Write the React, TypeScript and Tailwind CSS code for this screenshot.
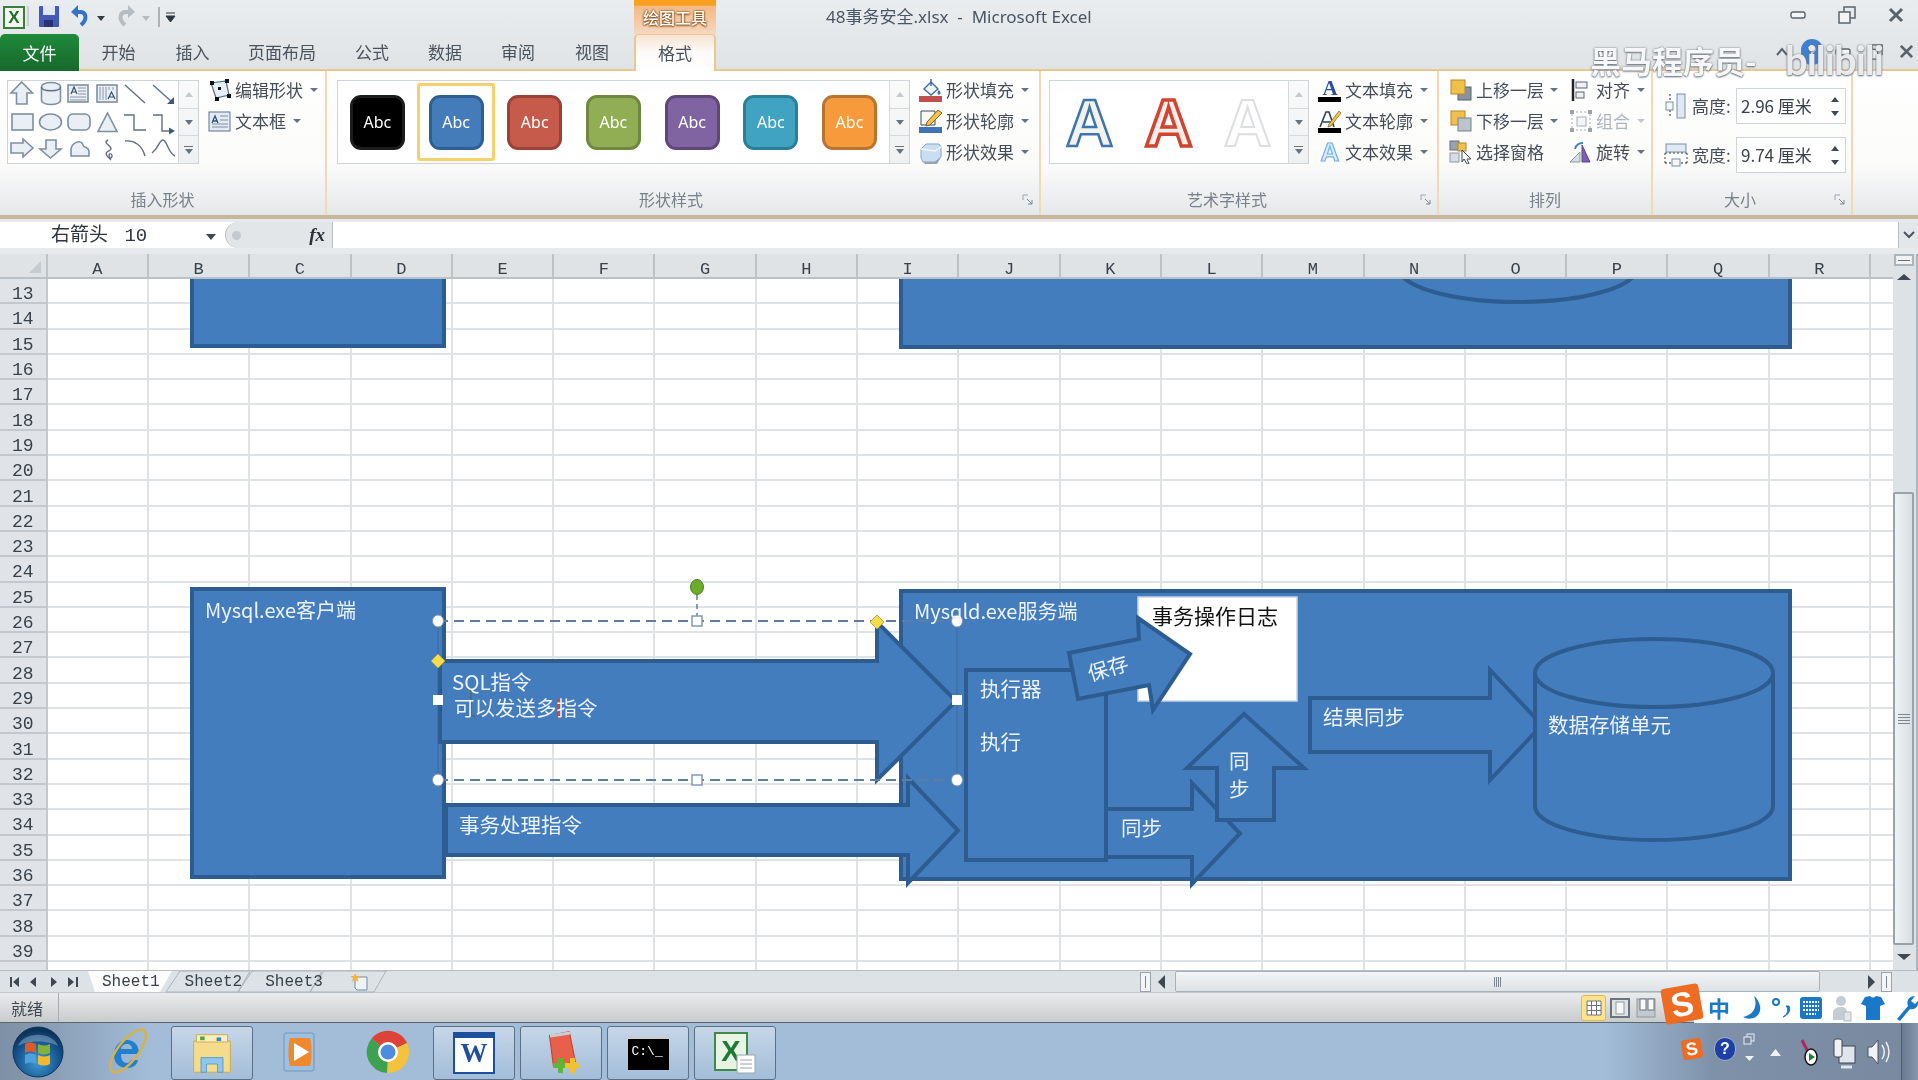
import type { ReactNode } from "react"

const COLUMNS = ["A", "B", "C", "D", "E", "F", "G", "H", "I", "J", "K", "L", "M", "N", "O", "P", "Q", "R"]
const ROWS = Array.from({ length: 27 }, (_, i) => i + 13)

const SWATCHES = [
  { box: "bg-[#000000] border-[#1c1c1c]" },
  { box: "bg-[#447cb9] border-[#2e5f92]", selected: true },
  { box: "bg-[#c75b4b] border-[#9a4237]" },
  { box: "bg-[#92ae54] border-[#70873f]" },
  { box: "bg-[#8064a2] border-[#5d4878]" },
  { box: "bg-[#40a3c2] border-[#2c7f98]" },
  { box: "bg-[#f79a3b] border-[#b9752f]" },
]

const FILL = "#437dbd"
const LINE = "#2d5c91"

function Caret({ muted }: { muted?: boolean }) {
  return (
    <span
      className={
        muted
          ? "w-0 h-0 border-x-[4px] border-t-[4px] border-x-transparent border-t-[#c3c8cd]"
          : "w-0 h-0 border-x-[4px] border-t-[4px] border-x-transparent border-t-[#67727d]"
      }
    />
  )
}

function Launcher() {
  return (
    <svg width="12" height="12" viewBox="0 0 12 12" className="absolute right-[5px] bottom-[9px]">
      <path d="M1 6V1h5" fill="none" stroke="#9aa5af" />
      <path d="M5 5l5 5M10 6v4H6" fill="none" stroke="#7b8894" />
    </svg>
  )
}

function RibbonGroup({ className, label, launcher, children }: { className: string; label: string; launcher?: boolean; children: ReactNode }) {
  return (
    <div className={`relative h-full border-r-2 border-[#f0d9b3] ${className}`}>
      <div className="flex h-[117px] pt-[3px]">{children}</div>
      <div className={launcher ? "pr-[24px] text-center text-[16px] leading-[22px] text-[#77818b]" : "text-center text-[16px] leading-[22px] text-[#77818b]"}>{label}</div>
      {launcher && <Launcher />}
    </div>
  )
}

function MenuItem({ icon, label, muted, noCaret, caretGap = "ml-[7px]" }: { icon: ReactNode; label: string; muted?: boolean; noCaret?: boolean; caretGap?: string }) {
  return (
    <div className="flex items-center h-[31px]">
      <span className="w-[24px] h-[24px] flex items-center justify-center shrink-0">{icon}</span>
      <span className={muted ? "ml-[3px] text-[17px] text-[#aeb5bc] whitespace-nowrap" : "ml-[3px] text-[17px] text-[#454e57] whitespace-nowrap"}>{label}</span>
      {!noCaret && (
        <span className={`${caretGap} flex`}>
          <Caret muted={muted} />
        </span>
      )}
    </div>
  )
}

function ScrollCol() {
  return (
    <div className="w-[20px] h-full flex flex-col border-l border-[#d5d9dd] bg-gradient-to-b from-[#fafafa] to-[#eef0f1]">
      <div className="flex-1 flex items-center justify-center border-b border-[#d5d9dd]">
        <span className="w-0 h-0 border-x-[4px] border-b-[5px] border-x-transparent border-b-[#c5cacf]" />
      </div>
      <div className="flex-1 flex items-center justify-center border-b border-[#d5d9dd]">
        <span className="w-0 h-0 border-x-[4px] border-t-[5px] border-x-transparent border-t-[#67727d]" />
      </div>
      <div className="flex-1 flex flex-col items-center justify-center gap-[2px]">
        <span className="w-[9px] h-[1px] bg-[#67727d]" />
        <span className="w-0 h-0 border-x-[4px] border-t-[5px] border-x-transparent border-t-[#67727d]" />
      </div>
    </div>
  )
}

function ShapeGlyphs() {
  const s = { fill: "#e9eff5", stroke: "#7d8fa1", strokeWidth: 1.6 }
  const l = { fill: "none", stroke: "#5f7184", strokeWidth: 1.4 }
  return (
    <svg width="170" height="82" viewBox="0 0 170 82">
      {/* first row */}
      <path d="M13.7 1L24.5 12H19V23H8.5V12H3z" {...s} />
      <path d="M33.5 6c0-6 19-6 19 0v13c0 6-19 6-19 0z" {...s} />
      <path d="M33.5 6c0 5 19 5 19 0" {...l} />
      <rect x="60" y="4" width="20" height="17" {...s} />
      <path d="M63 13l3-7 3 7M64 11h4" fill="none" stroke="#33506e" strokeWidth="1.2" />
      <path d="M70 7h8M70 10h8M70 13h8M62 16h16M62 19h16" stroke="#7d8fa1" strokeWidth="0.9" />
      <rect x="89" y="4" width="20" height="17" {...s} />
      <path d="M92 6v13M95 6v13M98 6v13M101 6v3M105 6v3" stroke="#7d8fa1" strokeWidth="0.9" />
      <path d="M100 18l3.500-7 3.500 7M101 16h5" fill="none" stroke="#33506e" strokeWidth="1.2" />
      <path d="M117 4l20 18" {...l} />
      <path d="M145 4l19 17" {...l} />
      <path d="M166 23v-7l-7 7z" fill="#3c5a78" />
      {/* second row */}
      <rect x="4" y="33" width="21" height="16" {...s} />
      <ellipse cx="42.5" cy="41" rx="11" ry="8" {...s} />
      <rect x="60" y="33" width="22" height="16" rx="5" {...s} />
      <path d="M99.5 32L109 50.5H90z" {...s} />
      <path d="M116 34h10v15h12" {...l} />
      <path d="M145 34h9v16h8" {...l} />
      <path d="M167 50l-6-3.500v7z" fill="#3c5a78" />
      {/* third row */}
      <path d="M3 62h12v-4L25 67 15 76v-4H3z" {...s} />
      <path d="M38 59h10v9h5L42.500 77 32 68h6z" {...s} />
      <path d="M63 75v-7c1-6 8-9 11-6 2 2 0 3 3 4s4 3 4 5v4z" {...s} />
      <path d="M100 59c-6 3 4 6 3 9s-7 2-4 7 7 0 4-2-2 5 0 6" {...l} />
      <path d="M117 60c9-1 17 4 20 15" {...l} />
      <path d="M144 72c7-5 7-13 11-13s5 13 12 16" {...l} />
    </svg>
  )
}

function TinyIcon({ children }: { children: ReactNode }) {
  return (
    <svg width="24" height="24" viewBox="0 0 24 24">
      {children}
    </svg>
  )
}

function ArtA({ className }: { className: string }) {
  return <div className={`w-[79px] text-center text-[66px] leading-[84px] font-bold font-['Liberation_Sans',sans-serif] ${className}`}>A</div>
}

function SizeField({ icon, label, value }: { icon: ReactNode; label: string; value: string }) {
  return (
    <div className="flex items-center h-[36px]">
      <span className="w-[24px] flex justify-center">{icon}</span>
      <span className="ml-[4px] w-[44px] text-[17px] text-[#454e57]">{label}</span>
      <div className="w-[110px] h-[36px] border border-[#cfd4d8] bg-white flex items-center pl-[4px] text-[17px] text-[#39424b]">
        <span className="flex-1 whitespace-nowrap">{value}</span>
        <span className="w-[20px] flex flex-col items-center gap-[9px]">
          <span className="w-0 h-0 border-x-[4px] border-b-[5px] border-x-transparent border-b-[#3f4850]" />
          <span className="w-0 h-0 border-x-[4px] border-t-[5px] border-x-transparent border-t-[#3f4850]" />
        </span>
      </div>
    </div>
  )
}

function TitleRow() {
  return (
    <div className="flex h-[34px]">
      <div className="w-[634px] relative flex items-center">
        <div className="ml-[3px] w-[22px] h-[23px] border-2 border-[#3a7d3c] bg-[#f3f8ee] text-[#1f6b2c] text-[17px] leading-[19px] font-bold text-center font-['Liberation_Sans',sans-serif]">X</div>
        <svg width="155" height="28" viewBox="25 0 155 28">
          <path d="M28 3v20" stroke="#a9b1b8" />
          <rect x="39" y="3" width="20" height="21" rx="1" fill="#4259b8" />
          <rect x="43" y="3" width="12" height="9" fill="#dfe6f4" />
          <rect x="44" y="17" width="9" height="7" fill="#27346f" />
          {/* undo */}
          <path d="M74 9h6c6 0 8 7 1 13" fill="none" stroke="#3273c9" strokeWidth="4" />
          <path d="M78 2l-7 7 7 6z" fill="#3273c9" />
          <path d="M97 13h8l-4 5z" fill="#333c45" />
          {/* redo */}
          <path d="M132 9h-6c-6 0-8 7-1 13" fill="none" stroke="#b5bcc2" strokeWidth="4" />
          <path d="M128 2l7 7-7 6z" fill="#b5bcc2" />
          <path d="M142 13h8l-4 5z" fill="#b5bcc2" />
          <path d="M159 4v20" stroke="#717a83" />
          <path d="M166 10h9M166 13h9l-4.500 6z" fill="#2f3840" stroke="#2f3840" />
        </svg>
      </div>
      <div className="w-[82px] flex items-center justify-center text-[16px] font-medium text-white [text-shadow:0_0_2px_#8a4f18,0_0_2px_#8a4f18,0_1px_2px_#8a4f18] bg-gradient-to-b from-[#f9a01e] from-[16%] via-[#f3b884] via-[17%] to-[#f5d8bf]">绘图工具</div>
      <div className="ml-[110px] leading-[33px] text-[17px] text-[#4a5561] font-['Noto_Sans','Noto_Sans_CJK_SC',sans-serif] whitespace-pre">48事务安全.xlsx  -  Microsoft Excel</div>
      <div className="ml-auto flex items-center pr-[14px] gap-[32px] mb-[4px]">
        <svg width="16" height="8" viewBox="0 0 16 8">
          <rect x="1" y="1" width="14" height="6" rx="2" fill="#f5f6f7" stroke="#59636c" strokeWidth="1.4" />
        </svg>
        <svg width="18" height="18" viewBox="0 0 18 18">
          <rect x="6" y="1" width="11" height="11" fill="none" stroke="#59636c" strokeWidth="1.5" />
          <rect x="1" y="6" width="11" height="11" fill="#f3f4f5" stroke="#59636c" strokeWidth="1.5" />
        </svg>
        <svg width="16" height="16" viewBox="0 0 16 16">
          <path d="M2 2l12 12M14 2L2 14" stroke="#59636c" strokeWidth="3" />
        </svg>
      </div>
    </div>
  )
}

function TabRow() {
  const tabs = [
    { label: "开始", w: "w-[79px]" },
    { label: "插入", w: "w-[69px]" },
    { label: "页面布局", w: "w-[110px]" },
    { label: "公式", w: "w-[70px]" },
    { label: "数据", w: "w-[76px]" },
    { label: "审阅", w: "w-[70px]" },
    { label: "视图", w: "w-[78px]" },
  ]
  return (
    <div className="flex h-[37px] border-b-2 border-[#ebc78f]">
      <div className="w-[79px] h-[37px] rounded-t-[5px] bg-gradient-to-b from-[#1f8a3a] to-[#17692b] text-white text-[17px] flex items-center justify-center">文件</div>
      {tabs.map((t) => (
        <div key={t.label} className={`${t.w} flex items-center justify-center text-[17px] text-[#4a535c]`}>
          {t.label}
        </div>
      ))}
      <div className="ml-[3px] w-[82px] h-[37px] rounded-t-[4px] border-x-2 border-t border-[#ebc78f] bg-gradient-to-b from-[#f7e3d2] via-[#fdfbf9] to-white text-[17px] text-[#4a535c] flex items-center justify-center">格式</div>
      <div className="ml-auto flex items-center pr-[4px]">
        <svg width="14" height="10" viewBox="0 0 14 10">
          <path d="M2 8l5-6 5 6" fill="none" stroke="#59636c" strokeWidth="2" />
        </svg>
        <span className="ml-[12px] w-[22px] h-[26px] rounded-full bg-[#3f80cf] text-white text-[18px] leading-[26px] text-center font-bold">?</span>
        <svg width="16" height="8" viewBox="0 0 16 8" className="ml-[12px]">
          <rect x="1" y="1" width="14" height="6" rx="2" fill="#f5f6f7" stroke="#59636c" strokeWidth="1.4" />
        </svg>
        <svg width="16" height="16" viewBox="0 0 18 18" className="ml-[16px]">
          <rect x="6" y="1" width="11" height="11" fill="none" stroke="#59636c" strokeWidth="1.5" />
          <rect x="1" y="6" width="11" height="11" fill="#f3f4f5" stroke="#59636c" strokeWidth="1.5" />
        </svg>
        <svg width="15" height="15" viewBox="0 0 16 16" className="ml-[16px]">
          <path d="M2 2l12 12M14 2L2 14" stroke="#59636c" strokeWidth="3" />
        </svg>
      </div>
    </div>
  )
}

function Ribbon() {
  return (
    <div className="flex h-[144px] bg-gradient-to-b from-white via-[#fbfbfa] via-[65%] to-[#e5e8ea]">
      <RibbonGroup className="w-[327px]" label="插入形状">
        <div className="ml-[7px] mt-[6px] w-[192px] h-[84px] flex border border-[#cfd4d8] bg-white">
          <ShapeGlyphs />
          <ScrollCol />
        </div>
        <div className="ml-[9px]">
          <MenuItem
            label="编辑形状"
            icon={
              <TinyIcon>
                <path d="M3 5l15-2 3 14-13 3z" fill="#e6eef7" stroke="#51708f" strokeWidth="1.2" />
                <path d="M2 3h4v4H2zM17 1h4v4h-4zM19 16h4v4h-4zM7 19h4v4H7zM10 9h3v3h-3z" fill="#101418" />
              </TinyIcon>
            }
          />
          <MenuItem
            label="文本框"
            icon={
              <TinyIcon>
                <rect x="1" y="3" width="21" height="19" fill="#e3ecf5" stroke="#5a7390" />
                <path d="M4 14l3-7 3 7M5 12h4" fill="none" stroke="#33506e" strokeWidth="1.3" />
                <path d="M12 7h8M12 11h8M4 15h16M4 18h16" stroke="#7d90a3" />
              </TinyIcon>
            }
          />
        </div>
      </RibbonGroup>

      <RibbonGroup className="w-[714px]" label="形状样式" launcher>
        <div className="ml-[10px] mt-[6px] w-[573px] h-[84px] flex border border-[#cfd4d8] bg-white">
          <div className="flex-1 flex items-center">
            {SWATCHES.map((s, i) => (
              <div
                key={i}
                className={
                  s.selected
                    ? "w-[78.7px] h-[78px] flex items-center justify-center border-[3px] border-[#f6d06c] rounded-[3px] bg-white"
                    : "w-[78.7px] h-[78px] flex items-center justify-center"
                }
              >
                <div className={`w-[55px] h-[55px] rounded-[11px] border-[3px] flex items-center justify-center text-[16px] text-white font-['Noto_Sans',sans-serif] ${s.box}`}>Abc</div>
              </div>
            ))}
          </div>
          <ScrollCol />
        </div>
        <div className="ml-[9px]">
          <MenuItem
            label="形状填充"
            icon={
              <TinyIcon>
                <path d="M5 11l7-7 7 7-7 6z" fill="#f2f4f6" stroke="#3d6ea8" strokeWidth="1.4" />
                <path d="M12 1v7" stroke="#3d6ea8" strokeWidth="1.5" />
                <path d="M20 12c2 2 2 4 0 5-2-1-2-3 0-5z" fill="#3d6ea8" />
                <rect x="0" y="18" width="23" height="6" fill="#c0504d" />
              </TinyIcon>
            }
          />
          <MenuItem
            label="形状轮廓"
            icon={
              <TinyIcon>
                <path d="M2 2h14v14H2z" fill="#f7f7f7" stroke="#3c4a58" />
                <path d="M8 13l11-12 4 3L11 16l-4 1z" fill="#f2c14b" stroke="#7a6320" />
                <rect x="0" y="18" width="23" height="6" fill="#3f73b3" />
              </TinyIcon>
            }
          />
          <MenuItem
            label="形状效果"
            icon={
              <TinyIcon>
                <path d="M7 4h13l2 3v10l-6 5H4l-2-4V9z" fill="#c9def2" stroke="#8ba8c5" />
                <path d="M2 9l14 2 6-4" fill="none" stroke="#f4f8fc" strokeWidth="1.5" />
                <path d="M4 22h12l6-5-4 7H6z" fill="#9aa3ad" />
              </TinyIcon>
            }
          />
        </div>
      </RibbonGroup>

      <RibbonGroup className="w-[398px]" label="艺术字样式" launcher>
        <div className="ml-[8px] mt-[6px] w-[260px] h-[84px] flex border border-[#cfd4d8] bg-white">
          <div className="flex-1 flex">
            <ArtA className="text-[#f2f3ee] [-webkit-text-stroke:2.5px_#3f74ad]" />
            <ArtA className="text-[#fbeee9] [-webkit-text-stroke:3.5px_#cf4433]" />
            <ArtA className="text-white [-webkit-text-stroke:2px_#dcdedf]" />
          </div>
          <ScrollCol />
        </div>
        <div className="ml-[9px]">
          <MenuItem
            label="文本填充"
            icon={
              <span className="relative w-[24px] h-[24px] flex justify-center">
                <span className="text-[21px] leading-[20px] font-bold text-[#2b4f9e] font-['Liberation_Serif',serif]">A</span>
                <span className="absolute left-0 bottom-0 w-[23px] h-[5px] bg-black" />
              </span>
            }
          />
          <MenuItem
            label="文本轮廓"
            icon={
              <TinyIcon>
                <path d="M2 18L8 3h3l5 15M5 13h9" fill="none" stroke="#33404d" strokeWidth="1.6" />
                <path d="M11 15L21 2l2 2-10 13-3 1z" fill="#f2c14b" stroke="#7a6320" strokeWidth="0.7" />
                <rect x="0" y="19" width="23" height="5" fill="#000" />
              </TinyIcon>
            }
          />
          <MenuItem label="文本效果" icon={<span className="text-[26px] leading-[24px] font-bold text-[#dcecf9] [-webkit-text-stroke:1.2px_#6fb0e6] font-['Liberation_Sans',sans-serif]">A</span>} />
        </div>
      </RibbonGroup>

      <RibbonGroup className="w-[214px]" label="排列">
        <div className="ml-[10px] w-[120px]">
          <MenuItem
            label="上移一层"
            caretGap="ml-[6px]"
            icon={
              <TinyIcon>
                <rect x="9" y="9" width="13" height="13" fill="#8a949e" stroke="#59636c" />
                <rect x="2" y="2" width="14" height="14" fill="#f1bf4b" stroke="#b78a23" />
              </TinyIcon>
            }
          />
          <MenuItem
            label="下移一层"
            caretGap="ml-[6px]"
            icon={
              <TinyIcon>
                <rect x="2" y="2" width="14" height="14" fill="#f1bf4b" stroke="#b78a23" />
                <rect x="9" y="9" width="13" height="13" fill="#bcc4cb" stroke="#77828c" />
              </TinyIcon>
            }
          />
          <MenuItem
            label="选择窗格"
            noCaret
            icon={
              <TinyIcon>
                <rect x="1" y="1" width="9" height="9" fill="#98a2ab" stroke="#66717b" />
                <rect x="9" y="3" width="8" height="8" fill="#f1bf4b" stroke="#b78a23" />
                <rect x="1" y="13" width="9" height="9" fill="#d9dde1" stroke="#8f99a2" />
                <path d="M13 10l9 9h-4l2 5-2 0-3-5-2 3z" fill="#fff" stroke="#3c4650" />
              </TinyIcon>
            }
          />
        </div>
        <div>
          <MenuItem
            label="对齐"
            icon={
              <TinyIcon>
                <path d="M4 1v22" stroke="#1d2227" strokeWidth="2.5" />
                <rect x="7" y="4" width="11" height="6" fill="#eef1f4" stroke="#5b6671" />
                <rect x="7" y="14" width="8" height="6" fill="#eef1f4" stroke="#5b6671" />
              </TinyIcon>
            }
          />
          <MenuItem
            label="组合"
            muted
            icon={
              <TinyIcon>
                <rect x="3" y="3" width="18" height="18" fill="none" stroke="#a7aeb5" strokeDasharray="2 2" />
                <rect x="8" y="8" width="9" height="9" fill="#f4f5f6" stroke="#a7aeb5" />
                <path d="M1 1h4v4H1zM19 1h4v4h-4zM1 19h4v4H1zM19 19h4v4h-4z" fill="#9ca3aa" />
              </TinyIcon>
            }
          />
          <MenuItem
            label="旋转"
            icon={
              <TinyIcon>
                <path d="M1 22l10-10v10z" fill="#d7dbdf" stroke="#8e98a1" />
                <path d="M13 22V5l8 17z" fill="#7a5fb3" stroke="#5b4490" />
                <path d="M6 9c1-4 4-6 8-6" fill="none" stroke="#3d7dc4" strokeWidth="1.8" />
              </TinyIcon>
            }
          />
        </div>
      </RibbonGroup>

      <RibbonGroup className="w-[200px]" label="大小" launcher>
        <div className="ml-[11px] mt-[14px] flex flex-col gap-[13px]">
          <SizeField
            label="高度:"
            value="2.96 厘米"
            icon={
              <svg width="22" height="26" viewBox="0 0 22 26">
                <rect x="12" y="1" width="8" height="24" fill="#dfe9f3" stroke="#7a8fa5" />
                <path d="M5 1v24" stroke="#20262c" strokeDasharray="2 2" />
                <rect x="1" y="9" width="7" height="8" fill="#f5f6f7" stroke="#7a8fa5" />
              </svg>
            }
          />
          <SizeField
            label="宽度:"
            value="9.74 厘米"
            icon={
              <svg width="24" height="24" viewBox="0 0 24 24">
                <rect x="2" y="1" width="20" height="8" fill="#dfe9f3" stroke="#7a8fa5" />
                <path d="M1 10h22M1 10v11M23 10v11" stroke="#3f4850" strokeDasharray="2 2" fill="none" />
                <path d="M1 20h22" stroke="#20262c" strokeDasharray="2 2" />
                <rect x="8" y="16" width="8" height="7" fill="#f5f6f7" stroke="#7a8fa5" />
              </svg>
            }
          />
        </div>
      </RibbonGroup>
    </div>
  )
}

function FormulaBar() {
  return (
    <div className="h-[39px] bg-[#e7eaec] border-t-[4px] border-[#c9b79c]">
      <div className="mt-[3px] h-[26px] flex bg-white">
        <div className="w-[225px] flex items-center pl-[51px] pr-[9px] pt-[3px] font-['Liberation_Mono','Noto_Sans_CJK_SC',monospace] text-[19px] text-[#2e353c] whitespace-pre [word-spacing:5px]">
          <span className="flex-1">右箭头 10</span>
          <span className="w-0 h-0 border-x-[5px] border-t-[6px] border-x-transparent border-t-[#3f4850]" />
        </div>
        <div className="w-[108px] rounded-l-full flex items-center justify-end pr-[7px] bg-[#e2e6e9] border-l border-[#b7bec4] border-r">
          <span className="mr-auto ml-[6px] w-[9px] h-[9px] rounded-full bg-[#c3c9ce]" />
          <span className="font-['Liberation_Serif',serif] italic font-bold text-[19px] text-[#2b3238]">fx</span>
        </div>
        <div className="flex-1" />
        <div className="w-[20px] bg-[#e4e7ea] border-l border-[#b7bec4] flex items-center justify-center">
          <svg width="12" height="8" viewBox="0 0 12 8">
            <path d="M1 1l5 5 5-5" fill="none" stroke="#4a535c" strokeWidth="2" />
          </svg>
        </div>
      </div>
    </div>
  )
}

function ArrowRight({ x, tip, y1, y2, neck, top, bottom }: { x: number; tip: number; y1: number; y2: number; neck: number; top: number; bottom: number }) {
  const mid = (top + bottom) / 2
  return <polygon points={`${x},${y1} ${neck},${y1} ${neck},${top} ${tip},${mid} ${neck},${bottom} ${neck},${y2} ${x},${y2}`} fill={FILL} stroke={LINE} strokeWidth="4" strokeLinejoin="miter" />
}

function Diagram() {
  return (
    <svg width="1893" height="691" viewBox="0 279 1893 691" className="absolute left-0 top-0">
      {/* upper shapes, cut off by the scroll position */}
      <rect x="192" y="260" width="252" height="86" fill={FILL} stroke={LINE} strokeWidth="4" />
      <rect x="901" y="260" width="889" height="87" fill={FILL} stroke={LINE} strokeWidth="4" />
      <ellipse cx="1518" cy="268" rx="119" ry="34" fill="none" stroke={LINE} strokeWidth="4" />

      <rect x="192" y="589" width="252" height="288" fill={FILL} stroke={LINE} strokeWidth="4" />
      <rect x="901" y="591" width="889" height="288" fill={FILL} stroke={LINE} strokeWidth="4" />
      <rect x="1138" y="597" width="159" height="104" fill="#ffffff" stroke="#c8d4e0" strokeWidth="1.5" />
      <rect x="966" y="670" width="140" height="190" fill={FILL} stroke={LINE} strokeWidth="4" />

      <ArrowRight x={1106} tip={1240} y1={809} y2={857} neck={1192} top={783} bottom={884} />
      <polygon points="1244,714 1304,768 1274,768 1274,820 1217,820 1217,768 1187,768" fill={FILL} stroke={LINE} strokeWidth="4" />
      <polygon points="1069,653 1139,639 1138,618 1190,654 1153,710 1149,685 1078,699" fill={FILL} stroke={LINE} strokeWidth="4" />

      <ArrowRight x={1310} tip={1542} y1={698} y2={752} neck={1490} top={670} bottom={780} />

      <path d="M1535 673v133c0 19 54 34 119 34s119-15 119-34V673" fill={FILL} stroke={LINE} strokeWidth="4" />
      <ellipse cx="1654" cy="673" rx="119" ry="34" fill={FILL} stroke={LINE} strokeWidth="4" />

      <ArrowRight x={440} tip={956} y1={661} y2={742} neck={877} top={622} bottom={780} />
      <ArrowRight x={446} tip={958} y1={805} y2={855} neck={908} top={778} bottom={883} />

      {/* selection frame of the arrow being edited */}
      <path d="M438 621H957M438 780H957" stroke="#5d7f9f" strokeWidth="2" strokeDasharray="10 6" />
      <path d="M438 621V780M957 621V780" stroke="#3a628c" strokeWidth="1" opacity="0.7" />
      <path d="M697 595V621" stroke="#5d7f9f" strokeWidth="1.5" strokeDasharray="5 4" />
      <ellipse cx="697" cy="587" rx="6.5" ry="7.5" fill="#69ad2a" stroke="#4b7f1f" />
      {[
        [438, 621],
        [957, 621],
        [438, 780],
        [957, 780],
      ].map(([cx, cy]) => (
        <ellipse key={`${cx}-${cy}`} cx={cx} cy={cy} rx="5.5" ry="6" fill="#fff" stroke="#7f9ab5" />
      ))}
      <rect x="692" y="616" width="10" height="10" fill="#fff" stroke="#7f9ab5" strokeWidth="1.5" />
      <rect x="692" y="775" width="10" height="10" fill="#fff" stroke="#7f9ab5" strokeWidth="1.5" />
      <rect x="433" y="695" width="10" height="10" fill="#fff" />
      <rect x="952" y="695" width="10" height="10" fill="#fff" />
      <polygon points="877,615 884,622 877,629 870,622" fill="#f5de4a" stroke="#b7a24e" />
      <polygon points="438,654 445,661 438,668 431,661" fill="#f5de4a" stroke="#b7a24e" />

      {/* text cursor and I-beam pointer */}
      <path d="M558 699V719" stroke="#d3482c" strokeWidth="2" />
      <path d="M471 689V716M467 689h8M467 716h8" stroke="#59626b" strokeWidth="1.5" />
    </svg>
  )
}

function DiagramLabels() {
  const text = "absolute text-[20.5px] leading-[22px] text-[#eef3f9] whitespace-nowrap"
  return (
    <>
      <div className={`${text} left-[205px] top-[320px] text-[20px]`}>Mysql.exe客户端</div>
      <div className={`${text} left-[914px] top-[321px] text-[20px]`}>Mysqld.exe服务端</div>
      <div className="absolute left-[1152px] top-[324px] text-[21px] leading-[24px] text-[#111] whitespace-nowrap">事务操作日志</div>
      <div className={`${text} left-[452px] top-[391px]`}>SQL指令</div>
      <div className={`${text} left-[454px] top-[417px]`}>可以发送多指令</div>
      <div className={`${text} left-[459px] top-[534px]`}>事务处理指令</div>
      <div className={`${text} left-[980px] top-[398px]`}>执行器</div>
      <div className={`${text} left-[980px] top-[451px]`}>执行</div>
      <div className={`${text} left-[1087px] top-[377px] -rotate-[17deg] text-[#c9d9ea]`}>保存</div>
      <div className={`${text} left-[1229px] top-[470px]`}>同</div>
      <div className={`${text} left-[1229px] top-[498px]`}>步</div>
      <div className={`${text} left-[1121px] top-[537px]`}>同步</div>
      <div className={`${text} left-[1323px] top-[426px]`}>结果同步</div>
      <div className={`${text} left-[1548px] top-[434px]`}>数据存储单元</div>
    </>
  )
}

function SheetArea() {
  return (
    <div className="flex h-[716px]">
      <div className="w-[1893px]">
        <div className="flex h-[25px] bg-[#dfe3e6] border-b-2 border-[#b9c0c6] font-['Liberation_Mono',monospace] text-[17px] text-[#39414a]">
          <div className="w-[47.7px] border-r-2 border-[#bcc3c9] flex justify-end items-end pr-[5px] pb-[4px]">
            <span className="w-0 h-0 border-b-[12px] border-l-[12px] border-l-transparent border-b-[#c5cbd0]" />
          </div>
          {COLUMNS.map((c) => (
            <div key={c} className="w-[101.3px] border-r-2 border-[#bcc3c9] flex items-center justify-center pt-[7px] leading-[17px]">
              {c}
            </div>
          ))}
        </div>
        <div className="relative h-[691px] overflow-hidden">
          {ROWS.map((r) => (
            <div key={r} className="flex h-[25.3px]">
              <div className="w-[47.7px] bg-[#e0e4e8] border-r-2 border-b-2 border-[#c2c8cd] flex items-center justify-center pt-[7px] font-['Liberation_Mono',monospace] text-[18px] leading-[18px] text-[#39414a]">{r}</div>
              {COLUMNS.map((c) => (
                <div key={c} className="w-[101.3px] border-r-2 border-b-2 border-[#e0e3e5] bg-white" />
              ))}
              <div className="flex-1 border-b-2 border-[#e0e3e5] bg-white" />
            </div>
          ))}
          <div className="flex h-[8px]">
            <div className="w-[47.7px] bg-[#e0e4e8] border-r-2 border-[#c2c8cd]" />
            {COLUMNS.map((c) => (
              <div key={c} className="w-[101.3px] border-r-2 border-[#e0e3e5] bg-white" />
            ))}
            <div className="flex-1 bg-white" />
          </div>
          <Diagram />
          <DiagramLabels />
        </div>
      </div>

      <div className="w-[25px] flex flex-col items-center bg-[#dde2e6] border-r-2 border-[#aeb6bd] pr-[2px]">
        <div className="h-[12px] w-[20px] border-2 border-[#adb5bc] bg-[#f0f2f4] flex items-center justify-center shrink-0">
          <span className="w-[12px] h-[1px] bg-[#6a747e]" />
        </div>
        <span className="mt-[8px] w-0 h-0 border-x-[7px] border-b-[6px] border-x-transparent border-b-[#3f4850]" />
        <div className="mt-[212px] w-[21px] h-[453px] border-2 border-[#9aa3ab] rounded-[2px] bg-gradient-to-r from-[#f0f3f5] to-[#d8dee3] flex flex-col items-center justify-center gap-[2px]">
          <span className="w-[12px] h-[1px] bg-[#7c8791]" />
          <span className="w-[12px] h-[1px] bg-[#7c8791]" />
          <span className="w-[12px] h-[1px] bg-[#7c8791]" />
          <span className="w-[12px] h-[1px] bg-[#7c8791]" />
        </div>
        <span className="mt-[9px] w-0 h-0 border-x-[7px] border-t-[6px] border-x-transparent border-t-[#3f4850]" />
      </div>
    </div>
  )
}

function SheetTabs() {
  return (
    <div className="relative flex h-[23px] bg-[#dde2e7] border-t border-[#b5bcc3] border-b border-b-[#c3c8cc]">
      <div className="w-[89px] flex items-center pl-[10px] gap-[12px] text-[#3f4850]">
        <svg width="70" height="14" viewBox="0 0 70 14">
          <path d="M0 2h2v10H0zM9 2v10L3 7zM26 2v10l-6-5zM41 2v10l6-5zM58 2v10l6-5zM66 2h2v10h-2z" fill="#3f4850" />
        </svg>
      </div>
      <svg width="320" height="22" viewBox="0 0 320 22" className="absolute left-[85px] top-0">
        <path d="M3 0h84l-12 21H10z" fill="#fff" opacity="0.9" />
        <path d="M81 21L95 0h70l-12 21H81zM153 21L167 0h70l-12 21zM225 21L239 0h62l-12 21z" fill="none" stroke="#aab2ba" />
      </svg>
      <div className="relative flex items-center font-['Liberation_Mono',monospace] text-[16px] text-[#39414a]">
        <span className="ml-[13px]">Sheet1</span>
        <span className="ml-[25px]">Sheet2</span>
        <span className="ml-[23px]">Sheet3</span>
        <svg width="20" height="20" viewBox="0 0 20 20" className="ml-[27px]">
          <path d="M5 5h12v13H7l-2-2z" fill="#eef3f8" stroke="#6f8aa5" />
          <path d="M5 1l1.500 3L10 4 7.500 6.500 8.500 10 5 8 2 10l1-3.500L0.500 4 4 4z" fill="#f0b43a" />
        </svg>
      </div>
      <div className="ml-auto flex items-center">
        <span className="w-[11px] h-[20px] border border-[#9aa3ab] bg-[#f3f5f6] flex justify-center mr-[7px]">
          <span className="w-[1px] h-[12px] mt-[3px] bg-[#7c8791]" />
        </span>
        <span className="w-0 h-0 border-y-[7px] border-r-[7px] border-y-transparent border-r-[#3f4850] mr-[10px]" />
        <div className="w-[645px] h-[21px] border border-[#a9b1b8] rounded-[2px] bg-gradient-to-b from-[#f3f5f6] to-[#dde2e6] flex items-center justify-center gap-[1px]">
          <span className="w-[1px] h-[10px] bg-[#7c8791]" />
          <span className="w-[1px] h-[10px] bg-[#7c8791]" />
          <span className="w-[1px] h-[10px] bg-[#7c8791]" />
          <span className="w-[1px] h-[10px] bg-[#7c8791]" />
        </div>
        <span className="ml-[48px] w-0 h-0 border-y-[7px] border-l-[7px] border-y-transparent border-l-[#3f4850]" />
        <span className="ml-[6px] w-[11px] h-[20px] border border-[#9aa3ab] bg-[#f3f5f6] flex justify-center mr-[26px]">
          <span className="w-[1px] h-[12px] mt-[3px] bg-[#7c8791]" />
        </span>
      </div>
    </div>
  )
}

function StatusBar() {
  return (
    <div className="flex items-center h-[30px] bg-gradient-to-b from-[#e9ebec] to-[#c9cccd] border-b border-[#5f666c]">
      <div className="w-[59px] h-full pl-[11px] border-r border-[#a9aeb2] text-[16px] leading-[30px] text-[#3f4850]">就绪</div>
      <div className="ml-[1522px] w-[25px] h-[26px] rounded-[3px] bg-[#fde38d] border border-[#e5b94f] flex items-center justify-center">
        <svg width="16" height="16" viewBox="0 0 16 16">
          <path d="M1 1h14v14H1zM1 5.500h14M1 10.500h14M5.500 1v14M10.500 1v14" fill="#fff" stroke="#6a747e" />
        </svg>
      </div>
      <svg width="68" height="24" viewBox="0 0 68 24" className="ml-[2px]">
        <rect x="3" y="3" width="18" height="18" fill="#dfe3e6" stroke="#6a747e" strokeWidth="2" />
        <rect x="8" y="6" width="8" height="12" fill="#f5f6f7" stroke="#8f99a2" />
        <rect x="29" y="3" width="18" height="18" fill="#c3c8cc" stroke="#8f99a2" />
        <rect x="32" y="3" width="6" height="11" fill="#f8f9fa" stroke="#6a747e" />
        <rect x="40" y="3" width="6" height="11" fill="#f8f9fa" stroke="#6a747e" />
      </svg>
    </div>
  )
}

function SogouBar() {
  const blue = "#1a78c8"
  return (
    <div className="absolute left-[1694px] top-[992px] w-[224px] h-[31px] bg-white flex items-center">
      <div className="absolute -left-[31px] -top-[6px] w-[38px] h-[36px] rounded-[3px] -rotate-[10deg] bg-[#ee6b22] text-white text-[34px] leading-[36px] font-bold text-center font-['Liberation_Sans',sans-serif]">S</div>
      <div className="absolute left-[14px] top-0 text-[22px] leading-[31px] font-bold text-[#1a78c8]">中</div>
      <svg width="224" height="31" viewBox="0 0 224 31">
        <path d="M60 4c4 10 0 19-11 21 10 5 19-2 17-11-1-4-3-8-6-10z" fill={blue} />
        <circle cx="82" cy="10" r="3" fill="none" stroke={blue} strokeWidth="2" />
        <path d="M92 14c3 3 2 8-3 11 6-2 8-8 6-11z" fill={blue} stroke={blue} />
        <rect x="106" y="5" width="22" height="22" rx="3" fill={blue} />
        <path d="M109 10h16M109 14h16M109 18h16M112 22h10" stroke="#fff" strokeWidth="2" strokeDasharray="2 1" />
        <circle cx="147" cy="9" r="5" fill="#c5cdd4" />
        <path d="M139 28v-8c0-3 4-5 8-5s6 2 6 5v8z" fill="#c5cdd4" />
        <rect x="150" y="20" width="7" height="9" fill="#e2e6e9" stroke="#b3bbc2" />
        <path d="M171 5l5-1c2 2 4 2 6 0l5 1 4 7-5 2v14h-14V14l-5-2z" fill={blue} />
        <path d="M203 27l11-13c-2-5 1-10 7-10l-4 5 4 3 3-3c1 6-4 9-8 8l-10 12z" fill={blue} />
      </svg>
    </div>
  )
}

function Taskbar() {
  const buttons = "w-[82px] h-[54px] rounded-[3px] border border-[#5c6f85] bg-gradient-to-b from-[#c6d7e8] to-[#a3bdd9] flex items-center justify-center"
  return (
    <div className="flex items-end h-[57px] bg-gradient-to-r from-[#7d8fa5] from-0% via-[#a3bdd9] via-[8%] to-[#a3bdd9]">
      <div className="w-[76px] h-full flex items-center justify-center">
        <svg width="52" height="52" viewBox="0 0 52 52">
          <defs>
            <radialGradient id="orb" cx="50%" cy="70%" r="65%">
              <stop offset="0%" stopColor="#3f9ad6" />
              <stop offset="70%" stopColor="#14518a" />
              <stop offset="100%" stopColor="#0c3157" />
            </radialGradient>
          </defs>
          <circle cx="26" cy="26" r="25" fill="url(#orb)" stroke="#0d3558" />
          <path d="M13 18c4-2 7-2 11 0v9c-4-2-7-2-11 0z" fill="#dd5a2b" />
          <path d="M26 18c4 2 8 2 12 0v9c-4 2-8 2-12 0z" fill="#84b23a" />
          <path d="M13 29c4-2 7-2 11 0v9c-4-2-7-2-11 0z" fill="#4aa3dc" />
          <path d="M26 29c4 2 8 2 12 0v9c-4 2-8 2-12 0z" fill="#f0b92e" />
          <path d="M6 20c6-15 34-15 40 0-10-6-30-6-40 0z" fill="#fff" opacity="0.28" />
        </svg>
      </div>
      <div className="w-[95px] h-full flex items-center justify-center pl-[6px]">
        <svg width="50" height="50" viewBox="0 0 50 50">
          <path d="M12 27h25c0-9-5-14-12-14S12 19 12 28c0 8 5 13 13 13 6 0 10-3 11-8h-7c-1 2-2 3-4 3-4 0-6-3-6-9zm7-5c0-3 3-5 6-5s5 2 5 5z" fill="#1f7fd0" fillRule="evenodd" />
          <ellipse cx="26" cy="24" rx="26" ry="10" transform="rotate(-52 26 24)" fill="none" stroke="#d7b24a" strokeWidth="2.5" />
        </svg>
      </div>
      <div className={buttons}>
        <svg width="46" height="44" viewBox="0 0 50 48">
          <path d="M5 11h40v34H5z" fill="#f4dc8c" stroke="#c9a952" />
          <path d="M8 4h34v8H8z" fill="#fbeeb8" stroke="#c9a952" />
          <rect x="12" y="6" width="5" height="4" fill="#4aa64a" />
          <rect x="30" y="7" width="5" height="4" fill="#3f86c9" />
          <path d="M13 29h24v16h-6v-9H19v9h-6z" fill="#8fc7ec" stroke="#5a9cc9" />
        </svg>
      </div>
      <div className="w-[91px] h-full flex items-center justify-center">
        <svg width="42" height="44" viewBox="0 0 42 44">
          <rect x="6" y="3" width="30" height="38" rx="2" fill="#9cc0de" stroke="#6f97ba" />
          <path d="M12 8h20c2 5 2 23 0 28H12c-2-5-2-23 0-28z" fill="#ee8a2d" />
          <path d="M16 13l15 9-15 9z" fill="#fff" />
        </svg>
      </div>
      <div className="w-[88px] h-full flex items-center justify-center">
        <svg width="44" height="44" viewBox="0 0 44 44">
          <path d="M22 22L5.600 8.500A21 21 0 0 1 41 13z" fill="#dc4437" />
          <path d="M22 22l19-9a21 21 0 0 1-20 30z" fill="#f5c33b" />
          <path d="M22 22l-1 21A21 21 0 0 1 5.600 8.500z" fill="#3da14f" />
          <circle cx="22" cy="22" r="10" fill="#fff" />
          <circle cx="22" cy="22" r="7.500" fill="#4d8ce0" />
        </svg>
      </div>
      <div className="ml-[1px] flex gap-[5px]">
        <div className={buttons}>
          <div className="w-[42px] h-[42px] border-2 border-[#1e4f9c] border-t-[6px] bg-white text-[#1e4f9c] text-[27px] leading-[30px] font-bold text-center font-['Liberation_Serif',serif]">W</div>
        </div>
        <div className={buttons}>
          <svg width="44" height="48" viewBox="0 0 44 48">
            <path d="M11 6l20-3 5 30-22 5z" fill="#e8604a" stroke="#b9442f" transform="rotate(-2 22 22)" />
            <path d="M11 7l20-3" stroke="#c9ced3" strokeWidth="3" />
            <path d="M19 29h5v5h5v5h-5v5h-5v-5h-5v-5h5z" fill="#5fb636" />
            <path d="M31 29h5v5h5v5h-5v5h-5v-5h-5v-5h5z" fill="#f4c12e" />
          </svg>
        </div>
        <div className={buttons}>
          <div className="w-[41px] h-[34px] bg-black border-t-[3px] border-[#c9ced3] text-white text-[13px] leading-[26px] pl-[4px] font-['Liberation_Mono',monospace] whitespace-nowrap">C:\_</div>
        </div>
        <div className={buttons}>
          <div className="relative w-[42px] h-[42px]">
            <div className="w-[34px] h-[39px] border-2 border-[#3f8a47] bg-[#e8f3e4] text-[#1d7a34] text-[29px] leading-[34px] font-bold text-center font-['Liberation_Sans',sans-serif]">X</div>
            <svg width="20" height="20" viewBox="0 0 20 20" className="absolute right-0 bottom-0">
              <path d="M1 1h18v18H1z" fill="#fff" stroke="#98a4ad" />
              <path d="M4 6h12M4 10h12M4 14h12" stroke="#98a4ad" />
            </svg>
          </div>
        </div>
      </div>
      <div className="relative ml-auto w-[315px] h-full flex items-center justify-end bg-gradient-to-r from-[#a3bdd9] via-[#7e91a9] via-[35%] to-[#78899f]">
        <div className="absolute left-[79px] top-[16px] w-[20px] h-[20px] rounded-[3px] -rotate-[10deg] bg-[#ee6b22] text-white text-[18px] leading-[20px] font-bold text-center font-['Liberation_Sans',sans-serif]">S</div>
        <div className="absolute left-[111px] top-[14px] w-[22px] h-[24px] rounded-full bg-[#1d3fa6] border border-[#9fb2d0] text-white text-[16px] leading-[22px] font-bold text-center font-['Liberation_Sans',sans-serif]">?</div>
        <svg width="235" height="40" viewBox="0 0 235 40">
          <g transform="translate(25 0)">
            <rect x="61" y="2" width="7" height="7" fill="none" stroke="#e8edf3" />
            <rect x="58" y="5" width="7" height="7" fill="#78899f" stroke="#e8edf3" />
            <path d="M59 24h9l-4.500 5z" fill="#eef2f6" />
          </g>
          <path d="M109 24h11l-5.500-7z" fill="#eef2f6" />
          <g transform="translate(26 0)">
            <path d="M115 8l6 12" stroke="#b5255c" strokeWidth="3" />
            <ellipse cx="124" cy="25" rx="6" ry="8" fill="#fff" stroke="#111" strokeWidth="1.500" />
            <path d="M122 21l6 4-6 4z" fill="#19803a" />
          </g>
          <g transform="translate(23 0)">
            <rect x="155" y="14" width="16" height="17" fill="#dfe5eb" stroke="#3d4650" />
            <rect x="150" y="7" width="8" height="18" rx="2" fill="#eef2f6" stroke="#3d4650" />
            <path d="M157 35h11" stroke="#dfe5eb" strokeWidth="3" />
          </g>
          <g transform="translate(21 0)">
            <path d="M186 15h4l6-7v24l-6-7h-4z" fill="#eef2f6" stroke="#4a535c" />
            <path d="M200 13c3 4 3 10 0 14M204 10c4 6 4 14 0 20" fill="none" stroke="#eef2f6" strokeWidth="1.500" />
          </g>
        </svg>
        <div className="ml-[5px] w-[17px] h-full bg-gradient-to-r from-[#6a7a8e] to-[#8698ae] border-l border-[#4f5d6e]" />
      </div>
    </div>
  )
}

export default function App() {
  return (
    <div className="relative w-[1918px] h-[1080px] overflow-hidden font-['Noto_Sans_CJK_SC','Noto_Sans',sans-serif] bg-white blur-[0.5px]">
      <div className="bg-gradient-to-b from-[#eaedef] to-[#dfe3e6]">
        <TitleRow />
        <TabRow />
      </div>
      <Ribbon />
      <FormulaBar />
      <SheetArea />
      <SheetTabs />
      <StatusBar />
      <Taskbar />
      <SogouBar />

      {/* video watermark */}
      <div className="absolute left-[1590px] top-[44px] text-[31px] leading-[31px] font-bold text-[#f6f7f8] [text-shadow:0_1px_2px_#6c747c,0_0_2px_#6c747c] whitespace-nowrap">黑马程序员-</div>
      <div className="absolute left-[1785px] top-[38px] text-[40px] leading-[44px] font-bold tracking-[-1px] text-white/85 [text-shadow:0_1px_2px_#6c747c,0_0_2px_#6c747c] font-['Lato',sans-serif] whitespace-nowrap">bilibili</div>
    </div>
  )
}
